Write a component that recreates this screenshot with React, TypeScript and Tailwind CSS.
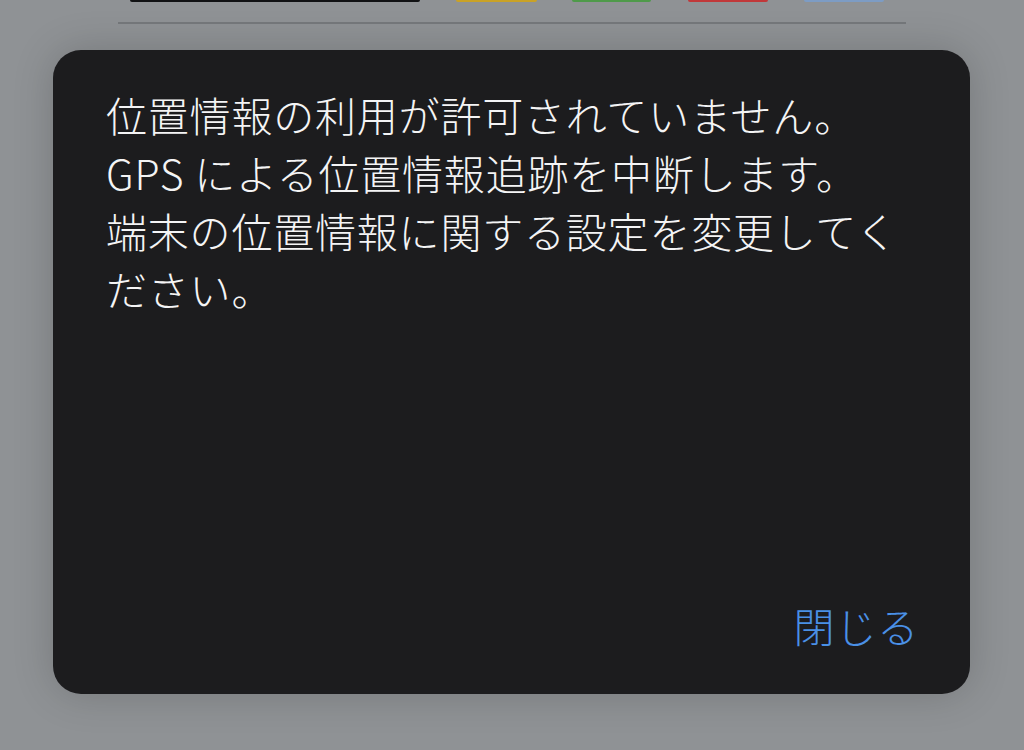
export default function App() {
  return (
    <div
      className="w-[1024px] h-[750px] overflow-hidden bg-[#8f9295] flex flex-col"
      style={{ fontFamily: '"Noto Sans CJK JP", "Noto Sans", sans-serif' }}
    >
      {/* dimmed page behind the alert */}
      <div className="flex items-start h-[2px] pl-[130px]">
        <div className="w-[290px] h-[2px] bg-[#111214] rounded-b" />
        <div className="w-[81px] h-[2px] bg-[#c9a227] rounded-b ml-[36px]" />
        <div className="w-[79px] h-[2px] bg-[#4f9a4a] rounded-b ml-[35px]" />
        <div className="w-[80px] h-[2px] bg-[#c0383a] rounded-b ml-[37px]" />
        <div className="w-[80px] h-[2px] bg-[#7d9cc4] rounded-b ml-[36px]" />
      </div>
      <div className="mt-[20px] mx-[118px] h-[2px] bg-[#75787b]" />

      {/* alert */}
      <div className="mt-[26px] ml-[53px] w-[917px] h-[644px] rounded-[28px] bg-[#1c1c1e] shadow-[0_0_40px_rgba(0,0,0,0.18)] flex flex-col justify-between pt-[35px] pb-[40px] pl-[53px] pr-[51px]">
        <div className="text-[41px] leading-[58px] tracking-[0.8px] font-light text-[#f4f4f5] whitespace-nowrap">
          <div>位置情報の利用が許可されていません。</div>
          <div>GPS による位置情報追跡を中断します。</div>
          <div>端末の位置情報に関する設定を変更してく</div>
          <div>ださい。</div>
        </div>
        <div className="flex justify-end">
          <button className="text-[41px] leading-[58px] tracking-[0.8px] font-light text-[#4a90e6]">閉じる</button>
        </div>
      </div>
    </div>
  )
}
